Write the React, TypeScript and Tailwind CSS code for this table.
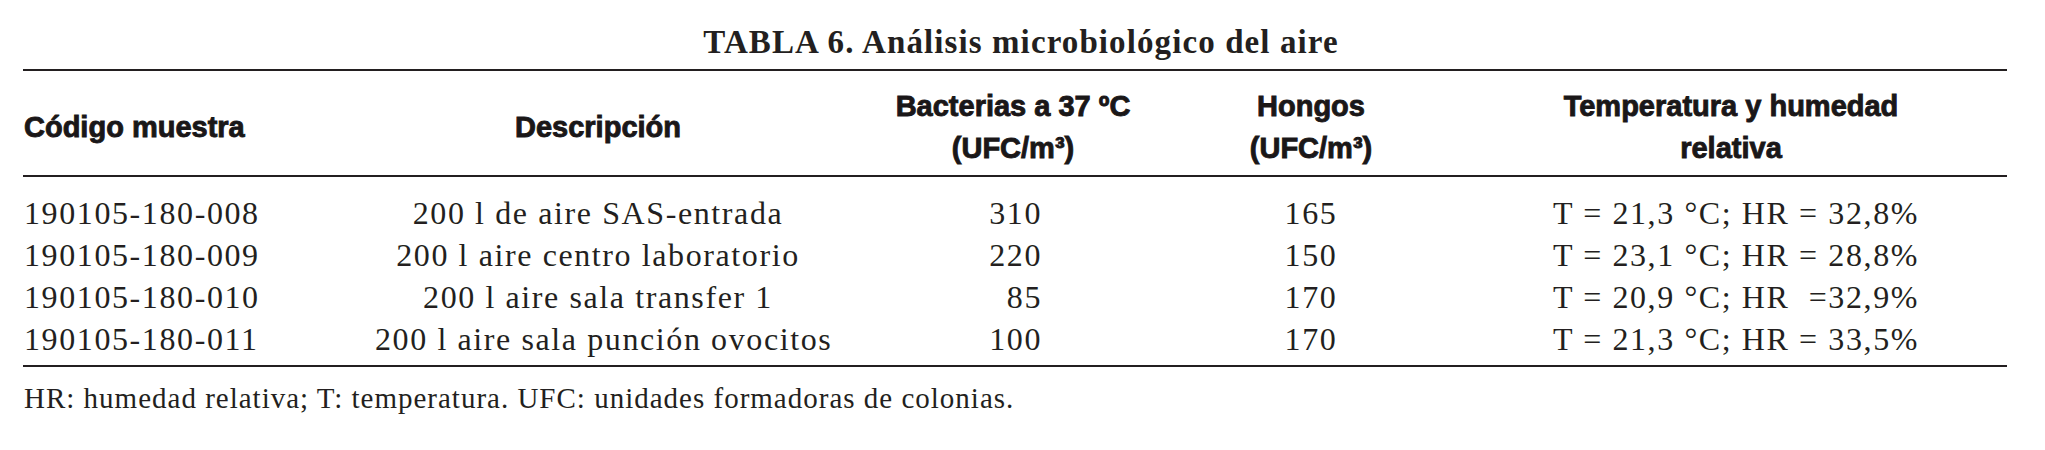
import React from 'react';

type Row = {
  code: string;
  desc: string;
  bact: string;
  hongos: string;
  temp: string;
};

const rows: Row[] = [
  { code: '190105-180-008', desc: '200 l de aire SAS-entrada', bact: '310', hongos: '165', temp: 'T = 21,3 °C; HR = 32,8%' },
  { code: '190105-180-009', desc: '200 l aire centro laboratorio', bact: '220', hongos: '150', temp: 'T = 23,1 °C; HR = 28,8%' },
  { code: '190105-180-010', desc: '200 l aire sala transfer 1', bact: '85', hongos: '170', temp: 'T = 20,9 °C; HR  =32,9%' },
  { code: '190105-180-011', desc: '200 l aire sala punción ovocitos', bact: '100', hongos: '170', temp: 'T = 21,3 °C; HR = 33,5%' },
];

// shared column template for header and body
const cols = 'grid grid-cols-[352px_446px_384px_212px_1fr]';

export default function App() {
  return (
    <div className="min-h-screen bg-white text-[#231f20]">
      <div className="ml-[23px] w-[1984px]">
        {/* Title */}
        <h1 className="pt-[22px] pl-[12px] text-center font-['Liberation_Serif',serif] text-[33px] leading-[40px] font-bold tracking-[1.1px]">
          TABLA 6. Análisis microbiológico del aire
        </h1>

        {/* Header */}
        <div
          className={`${cols} mt-[7px] items-center border-t-2 border-[#231f20] pt-[14px] pb-[6px] font-['Liberation_Sans',Arial,sans-serif] text-[29px] leading-[42px] font-bold whitespace-nowrap text-[#1a1718] [-webkit-text-stroke:0.9px_#1a1718]`}
        >
          <div className="pl-[1px]">Código muestra</div>
          <div className="text-center">Descripción</div>
          <div className="text-center">
            <div>Bacterias a 37 ºC</div>
            <div>(UFC/m³)</div>
          </div>
          <div className="text-center">
            <div>Hongos</div>
            <div>(UFC/m³)</div>
          </div>
          <div className="pl-[38px] text-center">
            <div>Temperatura y humedad</div>
            <div>relativa</div>
          </div>
        </div>

        {/* Body */}
        <div className="border-y-2 border-[#231f20] pt-[15px] pb-[5px] font-['Liberation_Serif',serif] text-[32px] leading-[42px] tracking-[1.6px] whitespace-nowrap">
          {rows.map((r) => (
            <div key={r.code} className={cols}>
              <div className="pl-[1px]">{r.code}</div>
              <div className="text-center">{r.desc}</div>
              <div className="pr-[163px] text-right">{r.bact}</div>
              <div className="text-center">{r.hongos}</div>
              <div className="pl-[136px] whitespace-pre">{r.temp}</div>
            </div>
          ))}
        </div>

        {/* Footnote */}
        <p className="mt-[13px] pl-[1px] font-['Liberation_Serif',serif] text-[29px] leading-[36px] tracking-[1px]">
          HR: humedad relativa; T: temperatura. UFC: unidades formadoras de colonias.
        </p>
      </div>
    </div>
  );
}
